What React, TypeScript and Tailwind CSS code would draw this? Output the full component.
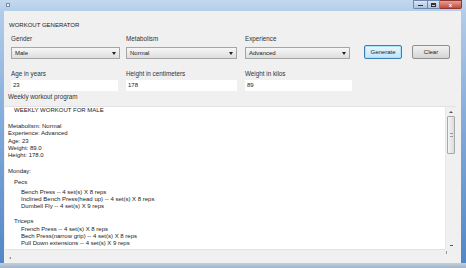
import React from "react";

const font = { fontFamily: '"Liberation Sans", Arial, sans-serif' };

function Select({ value, width }: { value: string; width: string }) {
  return (
    <div
      className={`${width} flex h-[12px] items-center justify-between border border-[#a5a5a5] bg-gradient-to-b from-[#f7f7f7] to-[#dedede] pl-[3px] pr-[3px] text-[6px] text-[#222]`}
    >
      <span>{value}</span>
      <span className="h-0 w-0 border-x-[2px] border-t-[3px] border-x-transparent border-t-[#222]" />
    </div>
  );
}

function Field({ value, width }: { value: string; width: string }) {
  return (
    <div className={`${width} flex h-[11px] items-center bg-white pl-[2px] text-[6px] text-[#222]`}>
      {value}
    </div>
  );
}

const lines: { text: string; indent: number; mt: number }[] = [
  { text: "Metabolism: Normal", indent: 3, mt: 8.5 },
  { text: "Experience: Advanced", indent: 3, mt: 0 },
  { text: "Age: 23", indent: 3, mt: 0 },
  { text: "Weight: 89.0", indent: 3, mt: 0 },
  { text: "Height: 178.0", indent: 3, mt: 0 },
  { text: "Monday:", indent: 3, mt: 8.6 },
  { text: "Pecs", indent: 9, mt: 3.5 },
  { text: "Bench Press -- 4 set(s) X 8 reps", indent: 16, mt: 2.6 },
  { text: "Inclined Bench Press(head up) -- 4 set(s) X 8 reps", indent: 16, mt: 0 },
  { text: "Dumbell Fly -- 4 set(s) X 9 reps", indent: 16, mt: 0 },
  { text: "Triceps", indent: 9, mt: 7.6 },
  { text: "French Press -- 4 set(s) X 8 reps", indent: 16, mt: 0 },
  { text: "Bech Press(narrow grip) -- 4 set(s) X 8 reps", indent: 16, mt: 0 },
  { text: "Pull Down extensions -- 4 set(s) X 9 reps", indent: 16, mt: 0 },
];

export default function App() {
  return (
    <div
      className="flex h-[268px] w-[466px] flex-col overflow-hidden bg-gradient-to-b from-[#b7d0eb] via-[#7ea7d8] to-[#4f86c6]"
      style={font}
    >
      {/* title bar */}
      <div className="flex h-[11px] shrink-0 items-start justify-between bg-gradient-to-b from-[#c4d9f0] to-[#b3cdea] pl-[6px] pr-[4px]">
        <div className="mt-[3px] h-[4px] w-[4px] border border-[#7a8aa0] bg-[#e8eef6]" />
        <div className="flex h-[9px]">
          <div className="flex w-[14px] items-end justify-center rounded-bl-[2px] border border-r-0 border-[#6f87a8] bg-gradient-to-b from-[#dbe7f5] to-[#a9c2e0] pb-[2px]">
            <div className="h-[1px] w-[5px] bg-[#333]" />
          </div>
          <div className="flex w-[13px] items-center justify-center border border-[#6f87a8] bg-gradient-to-b from-[#dbe7f5] to-[#a9c2e0]">
            <div className="h-[4px] w-[5px] border border-t-2 border-[#333]" />
          </div>
          <div className="flex w-[22px] items-center justify-center rounded-br-[2px] border border-l-0 border-[#8a3a32] bg-gradient-to-b from-[#e8a093] to-[#c5483b] text-[6px] font-bold leading-none text-white">
            x
          </div>
        </div>
      </div>

      {/* client area */}
      <div className="ml-[4px] mr-[5px] flex flex-1 flex-col bg-[#f0f0f0]">
        <div className="pl-[5px] pt-[10px] text-[6px] leading-[8px] text-[#222]">WORKOUT GENERATOR</div>

        <div className="mt-[6px] flex pl-[7px]">
          <div className="flex w-[115px] flex-col">
            <div className="text-[6.3px] leading-[8px] text-[#333]">Gender</div>
            <div className="mt-[4px]">
              <Select value="Male" width="w-[109px]" />
            </div>
          </div>
          <div className="flex w-[119px] flex-col">
            <div className="text-[6.3px] leading-[8px] text-[#333]">Metabolism</div>
            <div className="mt-[4px]">
              <Select value="Normal" width="w-[111px]" />
            </div>
          </div>
          <div className="flex w-[119px] flex-col">
            <div className="text-[6.3px] leading-[8px] text-[#333]">Experience</div>
            <div className="mt-[4px]">
              <Select value="Advanced" width="w-[105px]" />
            </div>
          </div>
          <div className="mt-[10px] flex gap-[10px]">
            <div className="flex h-[14px] w-[38px] items-center justify-center rounded-[2px] border border-[#3c7fb1] bg-gradient-to-b from-[#eaf6fd] to-[#bee6fd] text-[6px] text-[#222] shadow-[inset_0_0_0_1px_#aee0f8]">
              Generate
            </div>
            <div className="flex h-[14px] w-[38px] items-center justify-center rounded-[2px] border border-[#8e8f8f] bg-gradient-to-b from-[#f2f2f2] to-[#d5d5d5] text-[6px] text-[#222]">
              Clear
            </div>
          </div>
        </div>

        <div className="mt-[11px] flex pl-[7px]">
          <div className="flex w-[115px] flex-col">
            <div className="text-[6.3px] leading-[8px] text-[#333]">Age in years</div>
            <div className="mt-[2px]">
              <Field value="23" width="w-[107px]" />
            </div>
          </div>
          <div className="flex w-[119px] flex-col">
            <div className="text-[6.3px] leading-[8px] text-[#333]">Height in centimeters</div>
            <div className="mt-[2px]">
              <Field value="178" width="w-[111px]" />
            </div>
          </div>
          <div className="flex w-[119px] flex-col">
            <div className="text-[6.3px] leading-[8px] text-[#333]">Weight in kilos</div>
            <div className="mt-[2px]">
              <Field value="89" width="w-[107px]" />
            </div>
          </div>
        </div>

        <div className="mt-[2px] pl-[4px] text-[6.3px] leading-[8px] text-[#333]">Weekly workout program</div>

        {/* text area */}
        <div className="mb-[1px] ml-[1px] mr-[5px] mt-[5px] flex flex-1 flex-col border-t border-[#e3e3e3]">
          <div className="flex flex-1">
            <div className="flex-1 bg-white pt-[0.3px] text-[6px] leading-[7.3px] text-[#222]">
              <div className="pl-[9px]">WEEKLY WORKOUT FOR MALE</div>
              {lines.map((line, i) => (
                <div key={i} style={{ paddingLeft: line.indent, marginTop: line.mt }}>
                  {line.text}
                </div>
              ))}
            </div>
            {/* vertical scrollbar */}
            <div className="flex w-[11px] flex-col items-center border-l border-[#e8e8e8] bg-[#f0f0f0]">
              <div className="mt-[4px] h-0 w-0 border-x-[2px] border-b-[2px] border-x-transparent border-b-[#555]" />
              <div className="mt-[3px] flex h-[38px] w-[8px] items-center justify-center rounded-[1px] border border-[#a8a8a8] bg-gradient-to-r from-[#f4f4f4] to-[#dcdcdc]">
                <div className="h-[4px] w-[3px] border-y border-[#9a9a9a]" />
              </div>
              <div className="flex-1" />
              <div className="mb-[3px] h-[1px] w-[3px] bg-[#555]" />
            </div>
          </div>
          {/* horizontal scrollbar */}
          <div className="flex h-[13px]">
            <div className="flex flex-1 items-center border-t border-[#e3e3e3] bg-[#f0f0f0] pl-[4px]">
              <div className="mt-[3px] h-0 w-0 border-y-[1.5px] border-r-[2px] border-y-transparent border-r-[#777]" />
            </div>
            <div className="flex w-[11px] items-start bg-[#f0f0f0] pl-[1px] pt-[2px]">
              <div className="h-[3px] w-[1px] bg-[#999]" />
            </div>
          </div>
        </div>
      </div>
      <div className="h-[5px] shrink-0 bg-gradient-to-b from-[#c5cfdb] to-[#9fb3cc]" />
    </div>
  );
}
